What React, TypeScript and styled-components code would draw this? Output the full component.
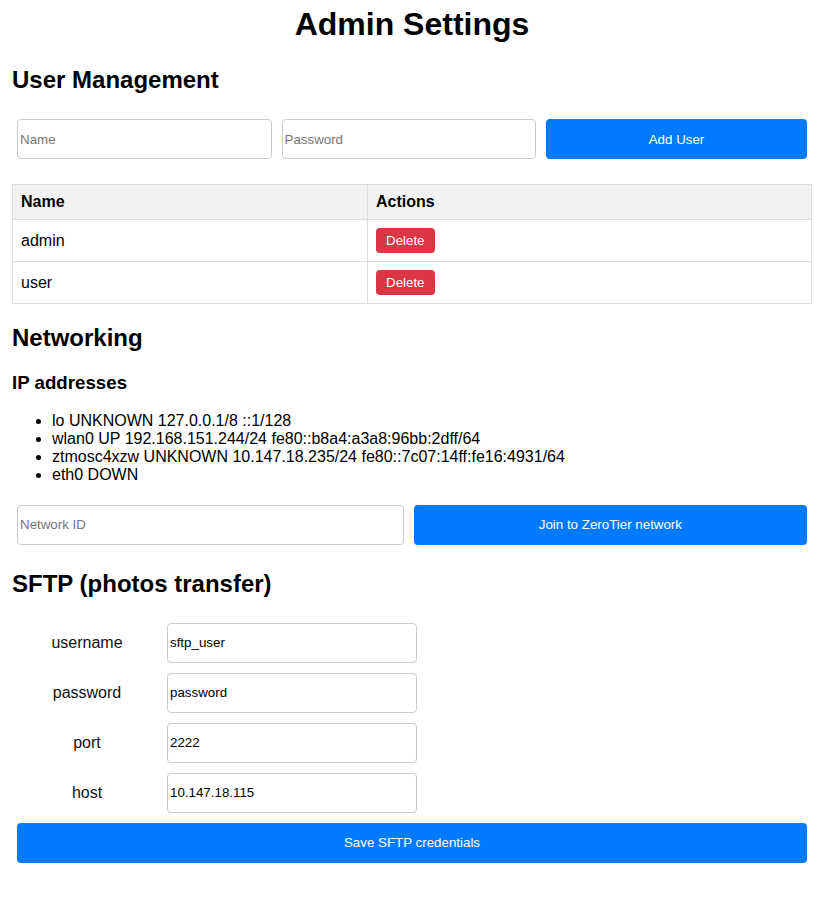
import React from "react";
import styled, { createGlobalStyle } from "styled-components";

const GlobalStyle = createGlobalStyle`
  html, body {
    margin: 0;
    padding: 0;
    background: #ffffff;
  }
  body {
    font-family: "Liberation Sans", Arial, sans-serif;
    color: #000000;
  }
  * { box-sizing: border-box; }
`;

const Page = styled.div`
  width: 826px;
  padding: 6px 14px 40px 12px;
`;

const Title = styled.h1`
  margin: 0 0 23px;
  font-size: 32px;
  font-weight: 700;
  text-align: center;
`;

const SectionTitle = styled.h2`
  margin: 20px 0;
  font-size: 24px;
  font-weight: 700;
`;

const SubTitle = styled.h3`
  margin: 18.72px 0 17.7px;
  font-size: 18.72px;
  font-weight: 700;
`;

const FormRow = styled.div`
  display: flex;
  width: 800px;
`;

const TextInput = styled.input`
  flex: 1 1 0;
  min-width: 0;
  height: 40px;
  margin: 5px;
  padding: 1px 2px;
  border: 1px solid #cccccc;
  border-radius: 4px;
  font-family: "Liberation Sans", Arial, sans-serif;
  font-size: 13.333px;
  color: #000000;
  background: #ffffff;
  outline: none;
  &::placeholder {
    color: #757575;
  }
`;

const PrimaryButton = styled.button<{ $full?: boolean }>`
  flex: ${(p) => (p.$full ? "1 1 auto" : "1 1 12.5px")};
  min-width: 0;
  height: 40px;
  margin: 5px;
  padding: 0;
  border: none;
  border-radius: 4px;
  background: #007bff;
  color: #ffffff;
  font-family: "Liberation Sans", Arial, sans-serif;
  font-size: 13.333px;
  white-space: nowrap;
  cursor: pointer;
`;

const UserTable = styled.table`
  width: 800px;
  margin-top: 20px;
  border-collapse: collapse;
  font-size: 16px;
`;

const HeadCell = styled.th`
  padding: 8px;
  border: 1px solid #dddddd;
  background: #f2f2f2;
  text-align: left;
  font-weight: 700;
`;

const Cell = styled.td`
  padding: 8px;
  border: 1px solid #dddddd;
  text-align: left;
  vertical-align: middle;
`;

const DangerButton = styled.button`
  padding: 5px 10px;
  border: none;
  border-radius: 4px;
  background: #dc3545;
  color: #ffffff;
  font-family: "Liberation Sans", Arial, sans-serif;
  font-size: 13.333px;
  line-height: 15px;
  display: block;
`;

const AddressList = styled.ul`
  margin: 16px 0;
  padding-left: 40px;
  font-size: 16px;
  line-height: 18px;
`;

const SftpGrid = styled.div`
  display: grid;
  grid-template-columns: 150px 260px;
  grid-auto-rows: 50px;
  align-items: center;
`;

const FieldLabel = styled.label`
  text-align: center;
  font-size: 16px;
  color: #111111;
`;

const SftpInput = styled(TextInput)`
  width: 250px;
  flex: none;
`;

const users = ["admin", "user"];

const addresses = [
  "lo UNKNOWN 127.0.0.1/8 ::1/128",
  "wlan0 UP 192.168.151.244/24 fe80::b8a4:a3a8:96bb:2dff/64",
  "ztmosc4xzw UNKNOWN 10.147.18.235/24 fe80::7c07:14ff:fe16:4931/64",
  "eth0 DOWN",
];

const sftpFields = [
  { label: "username", value: "sftp_user" },
  { label: "password", value: "password" },
  { label: "port", value: "2222" },
  { label: "host", value: "10.147.18.115" },
];

export default function App() {
  return (
    <>
      <GlobalStyle />
      <Page>
        <Title>Admin Settings</Title>

        <SectionTitle>User Management</SectionTitle>
        <FormRow>
          <TextInput placeholder="Name" />
          <TextInput placeholder="Password" type="password" />
          <PrimaryButton>Add User</PrimaryButton>
        </FormRow>

        <UserTable>
          <colgroup>
            <col style={{ width: 355 }} />
            <col />
          </colgroup>
          <thead>
            <tr>
              <HeadCell>Name</HeadCell>
              <HeadCell>Actions</HeadCell>
            </tr>
          </thead>
          <tbody>
            {users.map((u) => (
              <tr key={u}>
                <Cell>{u}</Cell>
                <Cell>
                  <DangerButton>Delete</DangerButton>
                </Cell>
              </tr>
            ))}
          </tbody>
        </UserTable>

        <SectionTitle>Networking</SectionTitle>
        <SubTitle>IP addresses</SubTitle>
        <AddressList>
          {addresses.map((a) => (
            <li key={a}>{a}</li>
          ))}
        </AddressList>
        <FormRow>
          <TextInput placeholder="Network ID" />
          <PrimaryButton>Join to ZeroTier network</PrimaryButton>
        </FormRow>

        <SectionTitle>SFTP (photos transfer)</SectionTitle>
        <SftpGrid>
          {sftpFields.map((f) => (
            <React.Fragment key={f.label}>
              <FieldLabel>{f.label}</FieldLabel>
              <SftpInput defaultValue={f.value} />
            </React.Fragment>
          ))}
        </SftpGrid>
        <FormRow>
          <PrimaryButton $full>Save SFTP credentials</PrimaryButton>
        </FormRow>
      </Page>
    </>
  );
}
